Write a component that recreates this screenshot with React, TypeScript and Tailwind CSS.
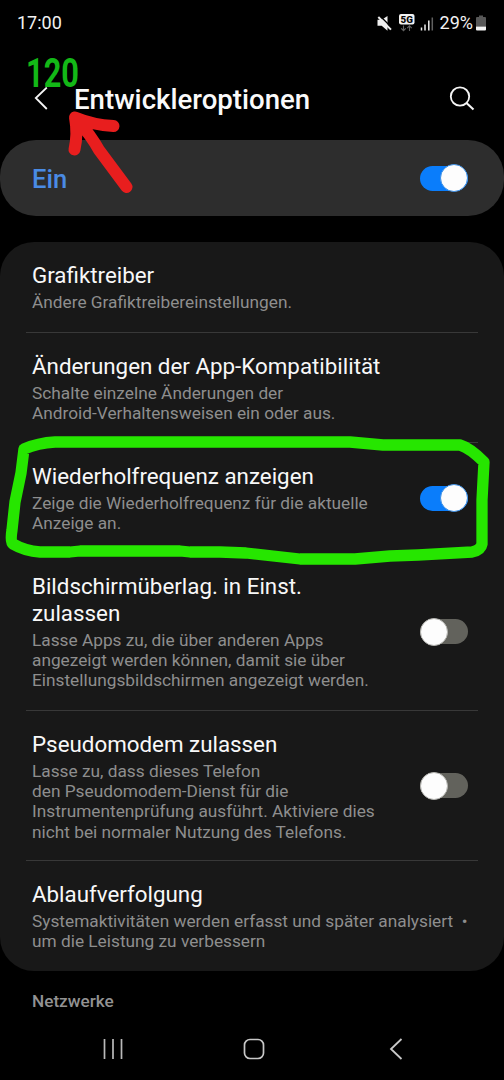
import React from "react";

function Toggle({ on }: { on: boolean }) {
  return (
    <span
      role="switch"
      aria-checked={on}
      className={
        on
          ? "flex h-[25px] w-12 shrink-0 items-center justify-end rounded-full bg-[#0a7dfb]"
          : "flex h-[25px] w-12 shrink-0 items-center justify-start rounded-full bg-[#62625c]"
      }
    >
      <span
        className={
          on
            ? "h-7 w-7 shrink-0 rounded-full border border-[#3c8fe6] bg-[#fdfdfd]"
            : "h-7 w-7 shrink-0 rounded-full border border-[#b4b4b0] bg-[#fdfdfd]"
        }
      />
    </span>
  );
}

type RowProps = {
  title: string[];
  lines: string[];
  on?: boolean;
  height: string;
  divider?: boolean;
};

function Row({ title, lines, on, height, divider = true }: RowProps) {
  return (
    <div className={`mx-[26px] flex items-center justify-between pr-[10px] pl-[6px] ${height} ${divider ? "border-b border-[#383838]" : ""}`}>
      <div className="h-full pt-5">
        <h2 className="text-[22.35px] leading-[27px] whitespace-nowrap text-[#f8f8f8]">
          {title.map((t) => (
            <span key={t} className="block">{t}</span>
          ))}
        </h2>
        <p className="pt-[3px] text-[17.27px] leading-[20.2px] whitespace-pre text-[#8e8e8e]">
          {lines.map((l) => (
            <span key={l} className="block">{l}</span>
          ))}
        </p>
      </div>
      {on !== undefined && <Toggle on={on} />}
    </div>
  );
}

function StatusBar() {
  return (
    <div className="flex h-[45px] items-center justify-between pr-[17px] pl-[17px]">
      <span className="text-[18px] leading-5 text-[#f2f2f2]">17:00</span>
      <div className="flex items-center">
        <svg width="128" height="24" viewBox="376 10 128 24" className="-mr-[64px]" fill="none">
          <path d="M377.5 18.8h4.2l5.8-3.8v14.8l-5.8-5h-4.2z" fill="#efefef" />
          <path d="M379.8 14.8l12 12" stroke="#000" strokeWidth="1.4" />
          <path d="M378.3 16l12.7 12.6" stroke="#efefef" strokeWidth="2" />
          <rect x="399" y="13" width="15.5" height="10.5" rx="2" fill="#f2f2f2" />
          <text x="406.8" y="21.6" textAnchor="middle" fontSize="9.8" fontWeight="900" fontFamily="Roboto, sans-serif" fill="#080808">5G</text>
          <path d="M403.5 24.5v5m-2.3-2.2l2.3 2.3 2.3-2.3M409.5 30v-5m-2.3 2.2l2.3-2.3 2.3 2.3" stroke="#626262" strokeWidth="1.1" />
          <path d="M421.5 26.5v3M425 23.5v6M428.8 19.5v10" stroke="#eeeeee" strokeWidth="1.5" />
          <path d="M432.3 16.5v13" stroke="#606060" strokeWidth="1.5" />
        </svg>
        <span className="text-[18px] leading-5 text-[#f2f2f2]">29%</span>
        <svg width="12" height="18" viewBox="0 0 12 18" className="ml-[2px]">
          <path d="M4 1.5h4v1.5h2a1 1 0 0 1 1 1v8.5H1V4a1 1 0 0 1 1-1h2z" fill="#575757" />
          <path d="M1 12.5h10v3a1 1 0 0 1-1 1H2a1 1 0 0 1-1-1z" fill="#f4f4f4" />
        </svg>
      </div>
    </div>
  );
}

export default function App() {
  return (
    <div className="relative flex h-[1080px] w-[504px] flex-col overflow-hidden bg-black font-['Roboto',sans-serif]">
      <StatusBar />
      <header className="flex h-[95px] items-center pt-[13px] pr-[29px] pl-[34px]">
        <svg width="14" height="24" viewBox="0 0 14 24" fill="none" stroke="#f5f5f5" strokeWidth="1.8">
          <path d="M12.8 0.5L1.8 11L12.8 22" />
        </svg>
        <h1 className="ml-[26px] pt-px text-[27.6px] leading-8 font-medium whitespace-nowrap text-[#fafafa]">Entwickleroptionen</h1>
        <svg width="26" height="26" viewBox="0 0 26 26" fill="none" stroke="#f5f5f5" strokeWidth="1.8" className="ml-auto">
          <circle cx="11" cy="10.5" r="9.2" />
          <path d="M17.5 17L24.5 23.5" strokeWidth="2.1" />
        </svg>
      </header>
      <section className="flex h-[76px] items-center justify-between rounded-[36px] bg-[#2d2d2d] pr-9 pl-8">
        <span className="pt-px text-[25.5px] leading-8 font-medium text-[#4a8be4]">Ein</span>
        <Toggle on />
      </section>
      <main className="mt-[26px] h-[729px] shrink-0 rounded-[34px] bg-[#181818]">
        <Row height="h-[91px]" title={["Grafiktreiber"]} lines={["Ändere Grafiktreibereinstellungen."]} />
        <Row
          height="h-[110px]"
          title={["Änderungen der App-Kompatibilität"]}
          lines={["Schalte einzelne Änderungen der", "Android-Verhaltensweisen ein oder aus."]}
        />
        <Row
          height="h-[110px]"
          title={["Wiederholfrequenz anzeigen"]}
          lines={["Zeige die Wiederholfrequenz für die aktuelle", "Anzeige an."]}
          on
          divider={false}
        />
        <Row
          height="h-[158px]"
          title={["Bildschirmüberlag. in Einst.", "zulassen"]}
          lines={["Lasse Apps zu, die über anderen Apps", "angezeigt werden können, damit sie über", "Einstellungsbildschirmen angezeigt werden."]}
          on={false}
        />
        <Row
          height="h-[150px]"
          title={["Pseudomodem zulassen"]}
          lines={["Lasse zu, dass dieses Telefon", "den Pseudomodem-Dienst für die", "Instrumentenprüfung ausführt. Aktiviere dies", "nicht bei normaler Nutzung des Telefons."]}
          on={false}
        />
        <Row
          height="h-[110px]"
          title={["Ablaufverfolgung"]}
          lines={["Systemaktivitäten werden erfasst und später analysiert  •", "um die Leistung zu verbessern"]}
          divider={false}
        />
      </main>
      <h3 className="mt-5 pl-8 text-[17.2px] leading-5 font-medium text-[#929292]">Netzwerke</h3>
      <nav className="mt-[25px] flex h-[26px] items-center pl-[102px]">
        <svg width="22" height="20" viewBox="0 0 22 20" stroke="#b9b9b9" strokeWidth="1.7">
          <path d="M2.5 0v20M11 0v20M19.5 0v20" />
        </svg>
        <svg width="22" height="22" viewBox="0 0 22 22" fill="none" stroke="#c8c8c8" strokeWidth="1.7" className="ml-[119px]">
          <rect x="1.5" y="1.5" width="19" height="19" rx="5.5" />
        </svg>
        <svg width="14" height="22" viewBox="0 0 14 22" fill="none" stroke="#c8c8c8" strokeWidth="1.8" className="ml-[124px]">
          <path d="M12.5 1L2 11L12.5 21" />
        </svg>
      </nav>

      <span className="absolute top-[53px] left-[26px] origin-left scale-x-[0.75] text-[41px] leading-10 font-bold text-[#13b817]">120</span>
      <svg width="504" height="1080" viewBox="0 0 504 1080" fill="none" strokeLinecap="round" strokeLinejoin="round" className="pointer-events-none absolute top-0 left-0">
        <path d="M74.5 149.5Q78 134 75 117.5Q93 125 113.5 126M76 118Q92 137 99 150L126.5 187M78 120L82 128" stroke="#e81e1e" strokeWidth="12" />
        <path
          d="M24 449Q38 443 55 442H350L383 445H460Q470 448 484 462L482 500L482 544Q481 550 472 552L418 555L390 556L355 559H300L246 553L220 552H190L180 551H80L70 552H40Q25 551 13 544Q10 542 12 530L15 502L21 473Z"
          stroke="#26e600"
          strokeWidth="11.3"
        />
      </svg>
    </div>
  );
}
